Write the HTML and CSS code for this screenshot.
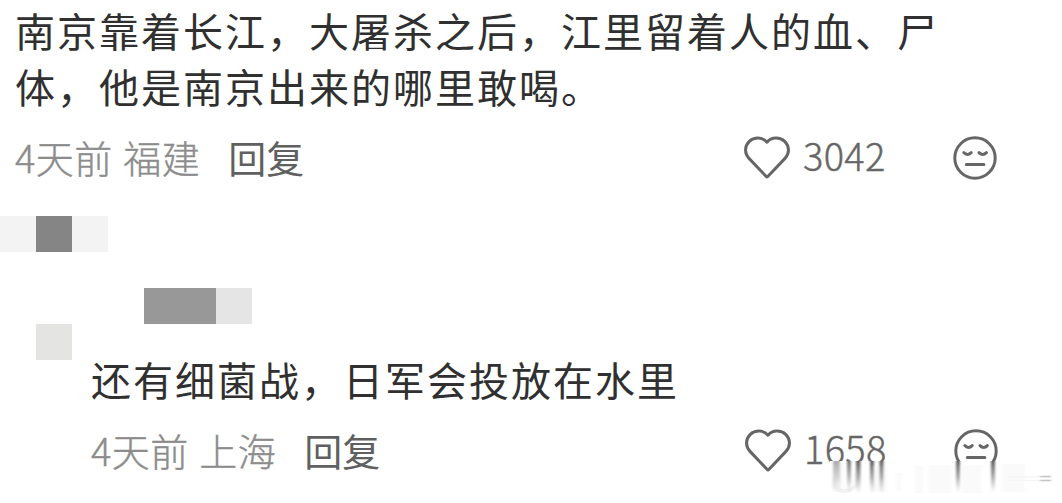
FILE: index.html
```html
<!DOCTYPE html>
<html lang="zh-CN">
  <head>
    <meta charset="UTF-8" />
    <meta name="viewport" content="width=device-width, initial-scale=1.0" />
    <link rel="stylesheet" href="styles.css">
    <title>评论</title>
  </head>
  <body>
    <svg class="symbols" width="0" height="0">
      <symbol id="heart" viewBox="0 0 48 44">
        <path d="M24 6.2C28.5 .8 37 .9 41.700 5.400C46.600 10.200 46.700 17.400 42 22.400L24.800 40.500Q24 41.300 23.200 40.500L6 22.400C1.300 17.400 1.400 10.200 6.300 5.400C11 .9 19.500 .8 24 6.200Z" />
      </symbol>
      <symbol id="face" viewBox="0 0 44 44">
        <circle cx="22" cy="22" r="20.200" />
        <path d="M10.800 16.600Q14.400 20.500 18.200 16.600M26 16.600Q29.700 20.500 33.400 16.600M13.300 28.400H30.900" />
      </symbol>
    </svg>

    <div class="comments">
      <div class="comment">
        <p class="text">南京靠着长江，大屠杀之后，江里留着人的血、尸体，他是南京出来的哪里敢喝。</p>
        <div class="meta">
          <span class="info">4天前 福建</span>
          <span class="reply">回复</span>
          <div class="actions">
            <svg class="heart"><use href="#heart" /></svg>
            <span class="count">3042</span>
            <svg class="face"><use href="#face" /></svg>
          </div>
        </div>
      </div>

      <!-- hidden avatar and user name -->
      <div class="mosaic">
        <div class="tile light"></div>
        <div class="tile dark"></div>
        <div class="tile light"></div>
        <div class="tile name"></div>
        <div class="tile name-end"></div>
        <div class="tile avatar"></div>
      </div>

      <div class="comment sub">
        <p class="text">还有细菌战，日军会投放在水里</p>
        <div class="meta">
          <span class="info">4天前 上海</span>
          <span class="reply">回复</span>
          <div class="actions">
            <svg class="heart"><use href="#heart" /></svg>
            <span class="count">1658</span>
            <svg class="face"><use href="#face" /></svg>
          </div>
        </div>
      </div>
    </div>

    <!-- smeared strip in the corner -->
    <svg class="smear" width="242" height="42" viewBox="0 0 242 42">
      <defs>
        <linearGradient id="fade" x1="0" y1="0" x2="0" y2="1">
          <stop offset="0" stop-color="#555" stop-opacity=".95" />
          <stop offset=".5" stop-color="#777" stop-opacity=".6" />
          <stop offset="1" stop-color="#aaa" stop-opacity="0" />
        </linearGradient>
        <filter id="soft" x="-10%" y="-10%" width="120%" height="120%">
          <feGaussianBlur stdDeviation="1.3 0.4" />
        </filter>
      </defs>
      <rect x="10" width="232" height="42" fill="#fff" />
      <g filter="url(#soft)">
        <g fill="#fafafa">
          <rect x="12" y="1" width="12" height="30" />
          <rect x="52" y="5" width="15" height="26" />
          <rect x="76" y="12" width="6" height="18" />
          <rect x="95" y="5" width="8" height="27" />
          <rect x="108" y="4" width="24" height="28" />
          <rect x="142" y="4" width="20" height="28" />
          <rect x="181" y="3" width="24" height="28" />
        </g>
        <path d="M14 17V24Q16 30 24 30T36 24V12" fill="none" stroke="#f2f2f2" stroke-width="4" />
        <g fill="url(#fade)">
          <rect x="13" y="0" width="7" height="31" opacity=".5" />
          <rect x="27" y="0" width="4" height="32" opacity=".85" />
          <rect x="36" y="0" width="4.500" height="33" />
          <rect x="50" y="0" width="4" height="33" />
          <rect x="59.500" y="0" width="4" height="33" />
          <rect x="136" y="0" width="4" height="32" />
          <rect x="171" y="0" width="4" height="32" />
        </g>
        <path d="M188 16H231M188 19.500H231" stroke="#f5f5f5" stroke-width="1.500" />
        <path d="M220 15.500H231M220 19.500H231" stroke="#c4c4c4" stroke-width="1.300" />
      </g>
    </svg>
  </body>
</html>
```

FILE: styles.css
```css
body {
    margin: 0;
    background-color: #fff;
    font-family: "Noto Sans CJK SC", sans-serif;
    overflow: hidden;
}

.symbols {
    display: block;
}

.comments {
    height: 503px;
    overflow: hidden;
}

.comment {
    padding: 2px 65px 0 15px;
}

.text {
    margin: 0;
    width: 930px;
    font-size: 40px;
    line-height: 56px;
    letter-spacing: 2px;
    color: #303030;
}

.meta {
    display: flex;
    align-items: center;
    height: 56px;
    margin-top: 16px;
    font-size: 38px;
    line-height: 52px;
    white-space: nowrap;
}

.info,
.reply {
    padding-bottom: 2px;
}

.info {
    font-weight: 300;
    letter-spacing: 0.4px;
    word-spacing: 2px;
    color: #8c8c8c;
    -webkit-text-stroke: 0.4px #8c8c8c;
}

.reply {
    margin-left: 28px;
    color: #606060;
}

.actions {
    display: flex;
    align-items: center;
    margin-left: auto;
    color: #666;
}

.actions svg {
    fill: none;
    stroke: #666;
    stroke-width: 3;
    stroke-linecap: round;
    stroke-linejoin: round;
}

.heart {
    width: 48px;
    height: 44px;
}

.count {
    width: 150px;
    margin-left: 12px;
    padding-bottom: 6px;
    font-weight: 300;
    letter-spacing: 0.3px;
    -webkit-text-stroke: 0.4px #666;
}

.face {
    width: 44px;
    height: 44px;
}

.mosaic {
    display: grid;
    grid-template-columns: repeat(7, 36px);
    grid-template-rows: repeat(4, 36px);
    margin-top: 30px;
}

.light {
    background-color: #f3f3f3;
}

.dark {
    background-color: #858585;
}

.name {
    grid-area: 3 / 5 / 4 / 7;
    background-color: #989898;
}

.name-end {
    grid-area: 3 / 7;
    background-color: #e5e5e5;
}

.avatar {
    grid-area: 4 / 2;
    background-color: #e4e4e3;
}

.sub {
    padding: 0 64px 0 91px;
    margin-top: -9px;
}

.sub .meta {
    margin-top: 16px;
}

.smear {
    position: absolute;
    left: 820px;
    top: 461px;
}
```
